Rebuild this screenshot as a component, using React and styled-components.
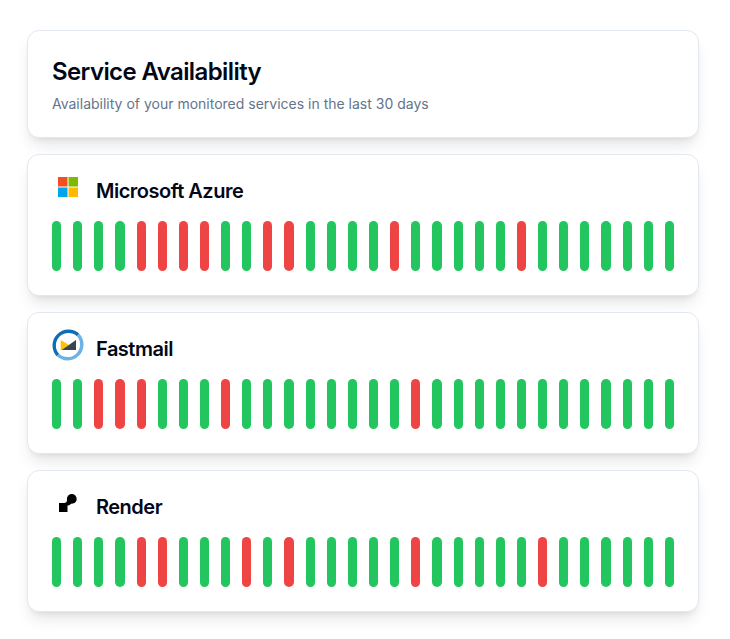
import React from "react";
import styled, { createGlobalStyle } from "styled-components";

const Global = createGlobalStyle`
  html, body { margin: 0; padding: 0; background: #fff; }
  body { font-family: Inter, "Liberation Sans", sans-serif; }
`;

const Page = styled.main`
  box-sizing: border-box;
  width: 730px;
  padding: 30px 0 27px 27px;
  display: flex;
  flex-direction: column;
  gap: 16px;
`;

const Card = styled.section`
  box-sizing: border-box;
  width: 672px;
  background: #fff;
  border: 1px solid #e2e8f0;
  border-radius: 12px;
  box-shadow: 0 10px 15px -3px rgba(0, 0, 0, 0.1), 0 4px 6px -4px rgba(0, 0, 0, 0.1);
`;

const IntroCard = styled(Card)`
  padding: 25px 24px 24px;
  height: 108px;
`;

const Heading = styled.h1`
  margin: 0;
  font-size: 24px;
  line-height: 32px;
  font-weight: 600;
  letter-spacing: -0.6px;
  color: #020817;
`;

const Subtitle = styled.p`
  margin: 6px 0 0;
  font-size: 14px;
  line-height: 20px;
  color: #64748b;
`;

const ServiceCard = styled(Card)`
  padding: 16px 24px 24px;
`;

const ServiceHeader = styled.header`
  display: flex;
  align-items: flex-start;
  gap: 12px;
  height: 32px;
  margin-bottom: 18px;
`;

const LogoBox = styled.div`
  width: 32px;
  height: 32px;
  flex: none;
  display: flex;
  align-items: center;
  justify-content: center;
`;

const ServiceName = styled.h2`
  margin: 6px 0 0;
  font-size: 20px;
  line-height: 28px;
  font-weight: 600;
  letter-spacing: -0.5px;
  color: #020817;
`;

const Bars = styled.div`
  display: grid;
  grid-template-columns: repeat(30, 1fr);
  gap: 12px;
`;

const Bar = styled.div`
  height: 50px;
  border-radius: 999px;
  background: ${(p) => (p.$down ? "#ef4444" : "#22c55e")};
`;

const AzureLogo = () => (
  <svg width="20" height="20" viewBox="0 0 20 20">
    <rect x="0" y="0" width="9.5" height="9.5" fill="#f25022" />
    <rect x="10.5" y="0" width="9.5" height="9.5" fill="#7fba00" />
    <rect x="0" y="10.5" width="9.5" height="9.5" fill="#00a4ef" />
    <rect x="10.5" y="10.5" width="9.5" height="9.5" fill="#ffb900" />
  </svg>
);

const FastmailLogo = () => (
  <svg width="32" height="32" viewBox="0 0 32 32">
    <path d="M5.9 26.1A14.3 14.3 0 0 1 26.1 5.9" fill="none" stroke="#0f6cb5" strokeWidth="3.4" />
    <path d="M26.1 5.9A14.3 14.3 0 0 1 5.9 26.1" fill="none" stroke="#69b3e7" strokeWidth="3.4" />
    <path d="M8.7 11V21H10L17 16Z" fill="#ffc107" />
    <path d="M9.7 21L24 11V21Z" fill="#3a4550" />
  </svg>
);

const RenderLogo = () => (
  <svg width="18" height="18" viewBox="0 0 18 18">
    <path d="M0 9H5C7 9 8 8 8 6V4H13V6C13 9 11.5 11.5 8.5 11.5V18H0Z" fill="#000" />
    <circle cx="12.8" cy="4.9" r="4.9" fill="#000" />
  </svg>
);

const services = [
  { name: "Microsoft Azure", logo: <AzureLogo />, down: [4, 5, 6, 7, 10, 11, 16, 22] },
  { name: "Fastmail", logo: <FastmailLogo />, down: [2, 3, 4, 8, 17] },
  { name: "Render", logo: <RenderLogo />, down: [4, 5, 9, 11, 17, 23] },
];

export default function App() {
  return (
    <>
      <Global />
      <Page>
        <IntroCard>
          <Heading>Service Availability</Heading>
          <Subtitle>Availability of your monitored services in the last 30 days</Subtitle>
        </IntroCard>
        {services.map((s) => (
          <ServiceCard key={s.name}>
            <ServiceHeader>
              <LogoBox>{s.logo}</LogoBox>
              <ServiceName>{s.name}</ServiceName>
            </ServiceHeader>
            <Bars>
              {Array.from({ length: 30 }, (_, i) => (
                <Bar key={i} $down={s.down.includes(i)} />
              ))}
            </Bars>
          </ServiceCard>
        ))}
      </Page>
    </>
  );
}
